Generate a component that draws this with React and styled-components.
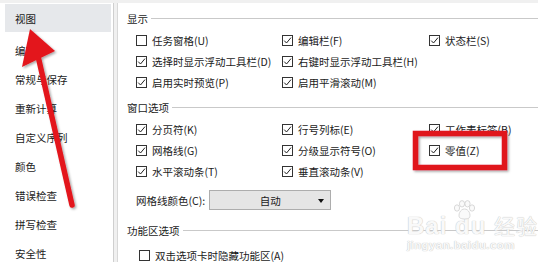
import React from 'react';
import styled, { createGlobalStyle } from 'styled-components';

const GlobalStyle = createGlobalStyle`
  html, body { margin: 0; padding: 0; background: #f0f0f0; }
  body { font-family: "Noto Sans CJK SC", "Noto Sans", sans-serif; }
`;

const Window = styled.div`
  position: relative;
  width: 538px;
  height: 262px;
  overflow: hidden;
  display: flex;
  gap: 3px;
  padding-top: 3px;
  box-sizing: border-box;
  background: #f0f0f0;
  color: #1a1a1a;
  font-size: 10.5px;
`;

const Sidebar = styled.div`
  width: 114px;
  flex-shrink: 0;
  background: #fff;
  border-right: 1px solid #cfcfcf;
  padding: 1px 2px 0 5px;
  box-sizing: border-box;
`;

const NavItem = styled.div`
  display: flex;
  align-items: center;
  height: ${p => (p.$active ? 28 : 29)}px;
  margin-bottom: ${p => (p.$active ? 3.5 : 0)}px;
  padding-left: 10px;
  background: ${p => (p.$active ? '#e6e8eb' : 'transparent')};
`;

const Content = styled.div`
  flex: 1;
  background: #fff;
  border-left: 1px solid #d8d8d8;
  padding: 7px 0 0 9px;
`;

const Heading = styled.div`
  display: flex;
  align-items: center;
  gap: 3px;
  height: 16px;
  margin-top: ${p => p.$top || 0}px;
  white-space: nowrap;

  &::after {
    content: '';
    flex: 1;
    height: 1px;
    background: #c9c9c9;
  }
`;

const Grid = styled.div`
  display: grid;
  grid-template-columns: 146px 147px 1fr;
  grid-auto-rows: 21px;
  margin: ${p => p.$top || 0}px 0 0 ${p => p.$indent || 9}px;
`;

const Option = styled.label`
  display: flex;
  align-items: center;
  gap: 5px;
  white-space: nowrap;
`;

const Box = styled.svg`
  width: 11px;
  height: 11px;
  flex-shrink: 0;
`;

const ColorRow = styled.div`
  display: flex;
  align-items: center;
  gap: 4px;
  height: 20px;
  margin: 8px 0 0 9px;
`;

const Select = styled.div`
  width: 122px;
  height: 20px;
  box-sizing: border-box;
  border: 1px solid #adadad;
  background: #e5e5e5;
  display: flex;
  align-items: center;
  position: relative;
  justify-content: center;

  &::after {
    content: '';
    position: absolute;
    right: 6px;
    top: 8px;
    border-left: 3.5px solid transparent;
    border-right: 3.5px solid transparent;
    border-top: 4px solid #111;
  }
`;

const Overlay = styled.svg`
  position: absolute;
  left: 0;
  top: 0;
  width: 538px;
  height: 262px;
  pointer-events: none;
`;

const Watermark = styled.div`
  position: absolute;
  left: 407px;
  top: 214px;
  color: #f9f9f9;
  text-shadow: 0 0 1px #c4c4c4, 0 0 1px #cfcfcf;
  font-family: "Liberation Sans", Arial, sans-serif;
  pointer-events: none;
  line-height: 1;
`;

const MarkTitle = styled.div`
  font-size: 24px;
  font-weight: bold;
  letter-spacing: 1px;
  span { font-family: "Noto Sans CJK SC", sans-serif; font-size: 21px; font-weight: normal; }
`;

const MarkUrl = styled.div`
  font-size: 11.5px;
  font-weight: bold;
  margin-top: 2px;
  letter-spacing: 0.4px;
`;

const Paw = styled.svg`
  position: absolute;
  left: 45px;
  top: -14px;
  width: 24px;
  height: 20px;
`;

const Check = ({ checked }) => (
  <Box viewBox="0 0 11 11">
    <rect x="0.5" y="0.5" width="10" height="10" fill="#fff" stroke="#333" />
    {checked && <path d="M2.2 5.6 L4.5 8 L9 2.6" fill="none" stroke="#222" strokeWidth="1" />}
  </Box>
);

const Opt = ({ label, checked = true }) => (
  <Option>
    <Check checked={checked} />
    <span>{label}</span>
  </Option>
);

const nav = ['视图', '编辑', '常规与保存', '重新计算', '自定义序列', '颜色', '错误检查', '拼写检查', '安全性'];

export default function App() {
  return (
    <>
      <GlobalStyle />
      <Window>
        <Sidebar>
          {nav.map((n, i) => (
            <NavItem key={n} $active={i === 0}>{n}</NavItem>
          ))}
        </Sidebar>
        <Content>
          <Heading>显示</Heading>
          <Grid $top={4}>
            <Opt label="任务窗格(U)" checked={false} />
            <Opt label="编辑栏(F)" />
            <Opt label="状态栏(S)" />
            <Opt label="选择时显示浮动工具栏(D)" />
            <Opt label="右键时显示浮动工具栏(H)" />
            <span />
            <Opt label="启用实时预览(P)" />
            <Opt label="启用平滑滚动(M)" />
          </Grid>

          <Heading $top={6}>窗口选项</Heading>
          <Grid $top={4}>
            <Opt label="分页符(K)" />
            <Opt label="行号列标(E)" />
            <Opt label="工作表标签(B)" />
            <Opt label="网格线(G)" />
            <Opt label="分级显示符号(O)" />
            <Opt label="零值(Z)" />
            <Opt label="水平滚动条(T)" />
            <Opt label="垂直滚动条(V)" />
          </Grid>
          <ColorRow>
            <span>网格线颜色(C):</span>
            <Select>自动</Select>
          </ColorRow>

          <Heading $top={12}>功能区选项</Heading>
          <Grid $top={7} $indent={12}>
            <Opt label="双击选项卡时隐藏功能区(A)" checked={false} />
          </Grid>
        </Content>

        <Watermark>
          <Paw viewBox="0 0 24 20" fill="#fafafa" stroke="#cfcfcf" strokeWidth="0.8">
            <ellipse cx="5" cy="8" rx="2.6" ry="3.2" />
            <ellipse cx="10" cy="3.8" rx="2.6" ry="3.2" />
            <ellipse cx="15.5" cy="3.8" rx="2.6" ry="3.2" />
            <ellipse cx="20" cy="8" rx="2.6" ry="3.2" />
            <path d="M12.5 9 C8 9 6 15 7.5 17.5 C9 19.5 16 19.5 17.5 17.5 C19 15 17 9 12.5 9 Z" />
          </Paw>
          <MarkTitle>Bai du <span>经验</span></MarkTitle>
          <MarkUrl>jingyan.baidu.com</MarkUrl>
        </Watermark>

        <Overlay viewBox="0 0 538 262">
          <defs>
            <filter id="sh" x="-20%" y="-20%" width="140%" height="140%">
              <feDropShadow dx="1.5" dy="1.5" stdDeviation="1.2" floodColor="#000" floodOpacity="0.35" />
            </filter>
          </defs>
          <g filter="url(#sh)" fill="#e3141c" stroke="none">
            <polygon points="30,29 22,67 55,51" />
            <line x1="38" y1="56" x2="72" y2="205" stroke="#e3141c" strokeWidth="5.5" strokeLinecap="round" />
          </g>
          <rect x="415.5" y="133.5" width="89" height="34" fill="none" stroke="#e0141b" strokeWidth="5.5" filter="url(#sh)" />
        </Overlay>
      </Window>
    </>
  );
}
